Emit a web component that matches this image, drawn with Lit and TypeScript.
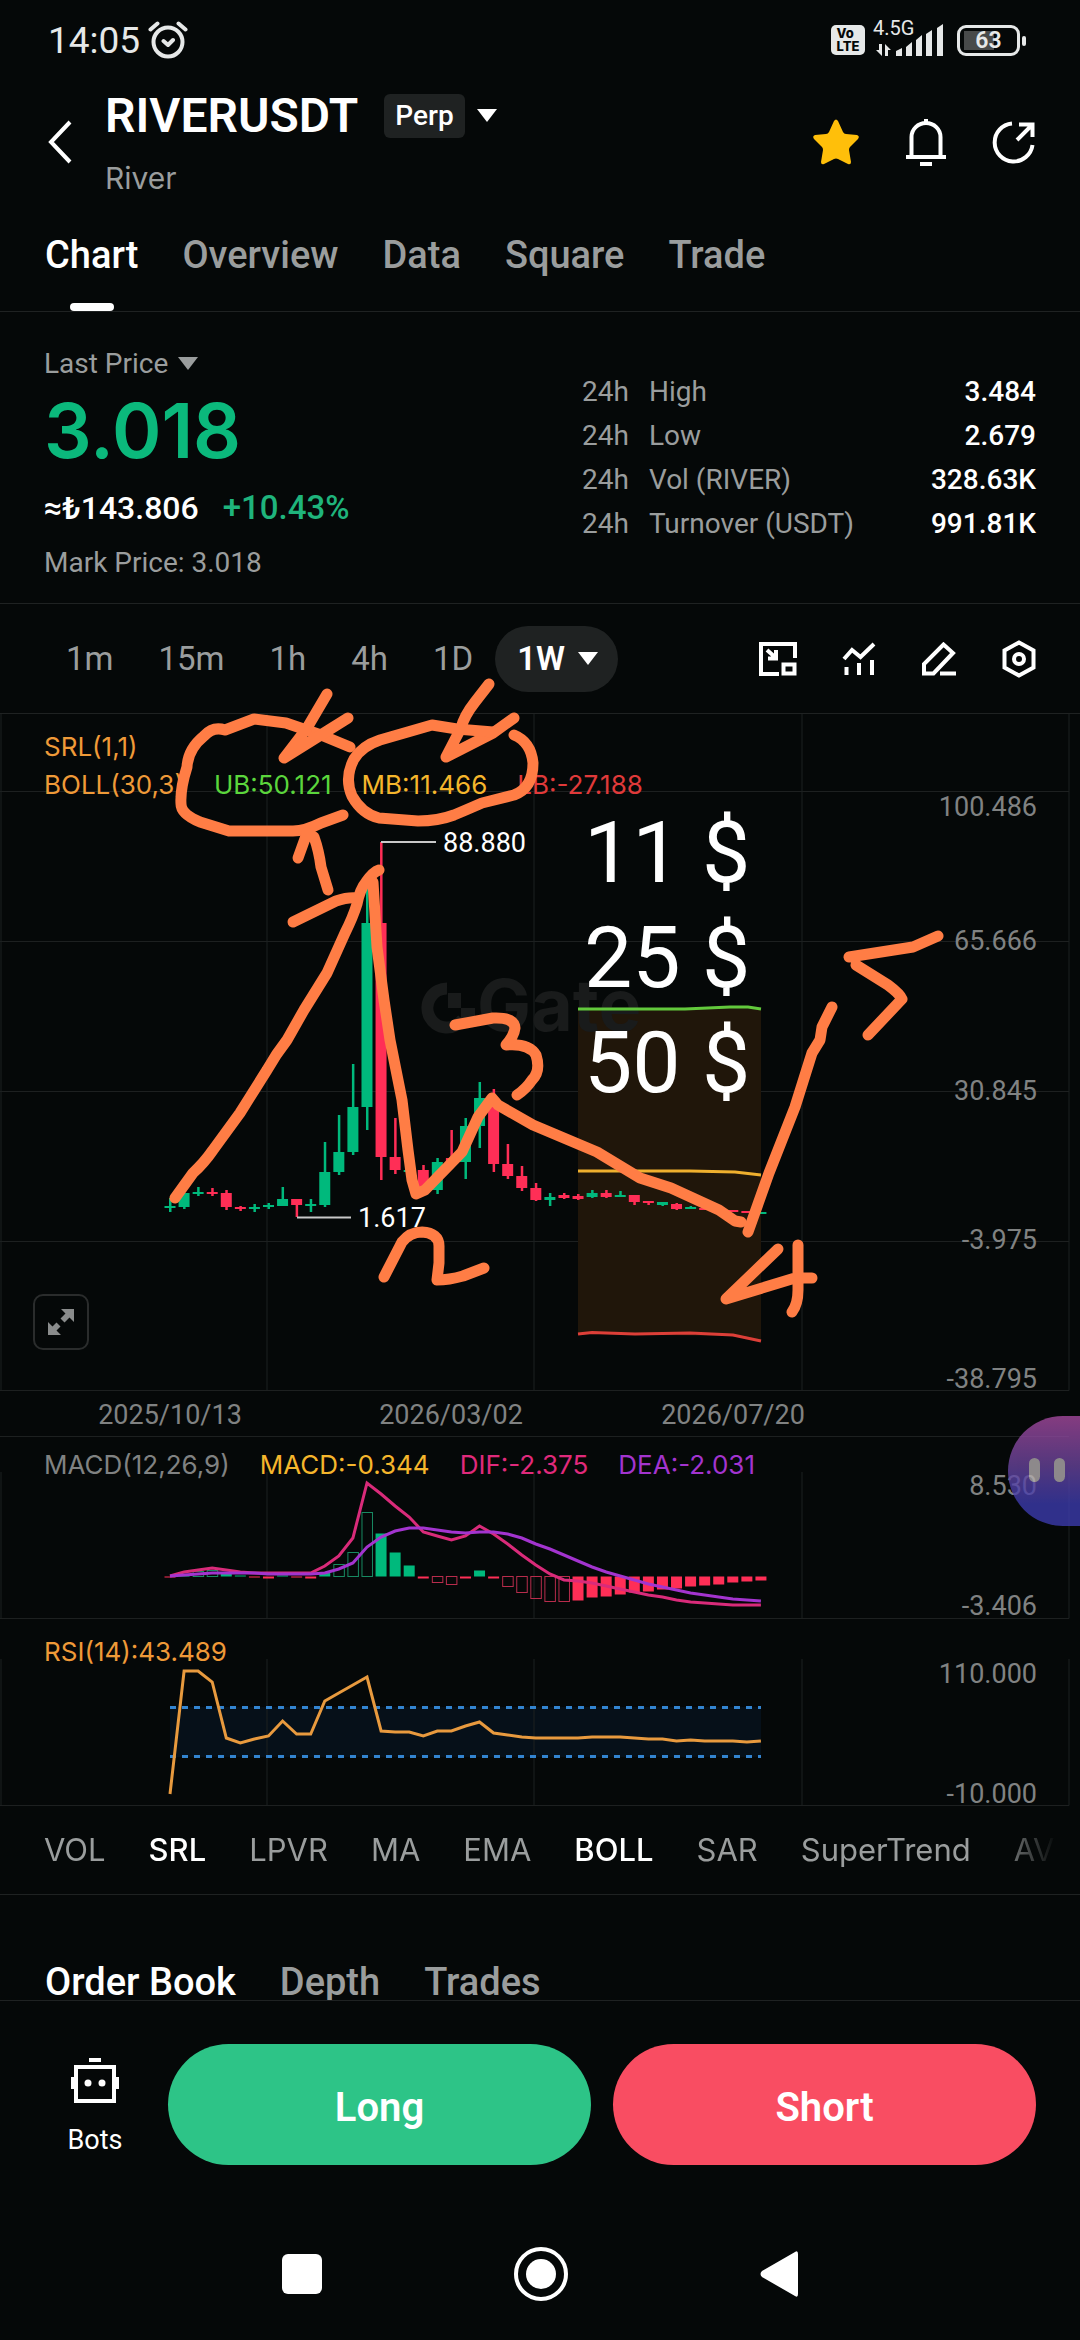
import { css, html, LitElement, svg } from 'lit';
import { customElement, property, state } from 'lit/decorators.js';
import { classMap } from 'lit/directives/class-map.js';

type Side = 'up' | 'down';

/** side, body top, body bottom, wick top, wick bottom */
type Candle = [Side, number, number, number, number];

interface MacdBar {
  value: number;
  hollow?: boolean;
}

const STEP = 14.07;
const FIRST_X = 170;
const BODY = 11;

const slotX = (i: number) => FIRST_X + i * STEP;

const CANDLES: Candle[] = [
  ['up', 492, 494, 484, 498],
  ['up', 479, 493, 479, 495],
  ['up', 478, 480, 473, 482],
  ['down', 478, 480, 474, 482],
  ['down', 479, 493, 476, 496],
  ['down', 493, 495, 492, 497],
  ['up', 493, 495, 490, 498],
  ['up', 491, 493, 489, 495],
  ['up', 485, 492, 473, 492],
  ['down', 485, 491, 485, 503],
  ['up', 490, 492, 485, 498],
  ['up', 458, 491, 428, 493],
  ['up', 438, 458, 401, 461],
  ['up', 393, 438, 350, 441],
  ['up', 209, 393, 166, 416],
  ['down', 209, 443, 128, 466],
  ['down', 443, 456, 404, 460],
  ['up', 456, 458, 454, 460],
  ['down', 456, 473, 451, 476],
  ['up', 448, 476, 444, 480],
  ['down', 444, 449, 416, 449],
  ['up', 412, 448, 404, 465],
  ['up', 384, 412, 368, 434],
  ['down', 384, 450, 375, 458],
  ['down', 450, 462, 430, 465],
  ['down', 462, 474, 452, 477],
  ['down', 474, 486, 469, 487],
  ['up', 483, 486, 479, 492],
  ['down', 481, 484, 479, 485],
  ['down', 482, 485, 480, 486],
  ['up', 479, 483, 476, 484],
  ['down', 479, 483, 476, 484],
  ['up', 481, 483, 477, 483],
  ['down', 481, 488, 481, 491],
  ['down', 487, 489, 487, 491],
  ['up', 488, 491, 488, 492],
  ['down', 490, 495, 489, 496],
  ['up', 493, 495, 492, 495],
  ['down', 494, 496, 494, 496],
  ['down', 495, 497, 495, 497],
  ['down', 496, 498, 496, 498],
  ['down', 497, 499, 497, 499],
  ['up', 498, 500, 498, 500],
];

const MACD_BARS: MacdBar[] = [
  { value: -1 },
  { value: 2 },
  { value: 5, hollow: true },
  { value: 6, hollow: true },
  { value: 3 },
  { value: 1 },
  { value: -1 },
  { value: -2 },
  { value: 1 },
  { value: -1 },
  { value: -2 },
  { value: 4 },
  { value: 12, hollow: true },
  { value: 24, hollow: true },
  { value: 64, hollow: true },
  { value: 43 },
  { value: 24 },
  { value: 11 },
  { value: -2 },
  { value: -6, hollow: true },
  { value: -8, hollow: true },
  { value: -2 },
  { value: 6 },
  { value: -2 },
  { value: -10, hollow: true },
  { value: -16, hollow: true },
  { value: -22, hollow: true },
  { value: -25, hollow: true },
  { value: -25, hollow: true },
  { value: -24 },
  { value: -21 },
  { value: -20 },
  { value: -18 },
  { value: -16 },
  { value: -15 },
  { value: -13 },
  { value: -12 },
  { value: -10 },
  { value: -9 },
  { value: -8 },
  { value: -6 },
  { value: -5 },
  { value: -4 },
];

// one y per week, measured inside its own panel
const DIF = [
  139, 135, 133, 131, 133, 135, 136, 136, 136, 136, 136, 129, 119, 101, 46, 57, 69, 80, 95, 99, 103, 99, 89, 97, 107,
  118, 128, 137, 143, 144, 146, 149, 152, 155, 158, 160, 163, 165, 166, 167, 168, 168, 168,
];
const DEA = [
  139, 138, 137, 136, 136, 136, 136, 137, 137, 137, 137, 136, 132, 126, 110, 100, 94, 91, 91, 93, 95, 96, 95, 95, 97,
  101, 107, 112, 118, 124, 130, 135, 139, 143, 147, 150, 153, 156, 158, 160, 162, 163, 164,
];
const RSI = [
  175, 52, 52, 63, 119, 124, 120, 117, 102, 115, 115, 82, 74, 66, 58, 112, 113, 113, 117, 112, 112, 107, 103, 114, 116,
  118, 119, 119, 119, 119, 118, 118, 118, 119, 120, 120, 122, 121, 122, 122, 122, 123, 122,
];

const GRID_X = [1, 267, 534, 802, 1069];
const GRID_Y = [77, 227, 377, 527];

const PRICE_AXIS = [
  { label: '100.486', y: 102 },
  { label: '65.666', y: 236 },
  { label: '30.845', y: 386 },
  { label: '-3.975', y: 535 },
  { label: '-38.795', y: 674 },
];

const STROKES = [
  'M343 101 L321 109 Q305 117 293 117 H229 L200 108 Q181 100 181 90 Q180 75 187 53 Q188 35 204 22 Q213 12 225 16 L254 5 L286 9 L321 21 L350 33',
  'M327 -20 L307 14 L284 44 L348 4',
  'M489 -30 L475 -12 Q464 2 461 14 L446 43 L493 19 L514 4',
  'M514 21 Q531 28 533 49 Q533 74 514 81 Q498 85 482 89 Q466 96 454 101 Q438 107 418 107 L379 104 Q362 100 352 82 Q344 64 354 45 Q362 32 380 26 L432 11 L457 15 L493 18',
  'M298 144 L307 119 L314 123 Q319 137 321 153 L328 176',
  'M175 484 L193 459 Q204 449 213 436 L240 399 Q252 380 267 356 Q276 340 287 326 L304 296 L327 259 L345 219 Q353 203 357 190 Q360 175 366 168 Q373 158 379 156',
  'M293 208 L336 187 Q348 183 357 184',
  'M373 168 L377 233 L384 286 L390 326 L402 386 L408 436 L412 466 L416 480 L425 476 L462 438 L478 403 L492 384 L498 391 L533 411 L597 438 L640 464 L671 474 L719 496 L735 507 L741 508',
  'M748 518 L769 459 L795 393 L812 339 L820 326 L822 313 L832 293',
  'M938 222 L913 233 L849 243 M856 251 L888 271 Q900 280 902 285 L868 321',
  'M455 311 L493 304 Q514 303 515 314 Q514 322 506 331 Q529 329 536 341 Q541 357 532 366 Q526 375 517 381',
  'M384 563 L402 528 Q410 518 422 518 Q439 519 439 532 V549 L437 566 Q449 566 463 562 L484 554',
  'M778 535 L726 585 L795 564 H812 M798 531 V576 Q798 590 792 598',
];

const points = (ys: number[]) => ys.map((y, i) => `${slotX(i).toFixed(1)},${y}`).join(' ');

@customElement('gate-icon')
export class GateIcon extends LitElement {
  static override styles = css`
    :host {
      display: inline-flex;
    }

    svg {
      display: block;
      fill: none;
      stroke: currentColor;
      stroke-width: 4;
    }

    .solid {
      fill: currentColor;
      stroke: none;
    }
  `;

  @property()
  name = '';

  private glyph() {
    switch (this.name) {
      case 'back':
        return svg`<svg width="24" height="44" viewBox="0 0 24 44"><path d="M22 2 L3 22 L22 42" /></svg>`;
      case 'star':
        return svg`<svg width="48" height="48" viewBox="0 0 48 48">
          <path class="solid" d="M22 3 Q24 0 26 3 L31 14 Q32 16 34 16 L45 17 Q48 18 46 21 L38 29 Q37 30 37 32 L39 44 Q39 47 36 46 L26 41 Q24 40 22 41 L12 46 Q9 47 9 44 L11 32 Q11 30 10 29 L2 21 Q0 18 3 17 L14 16 Q16 16 17 14 Z" />
        </svg>`;
      case 'bell':
        return svg`<svg width="40" height="48" viewBox="0 0 40 48">
          <path d="M5.500 39 V19 A14.500 14 0 0 1 34.500 19 V39 M0 39 H40 M20 1 V6 M14 46 H26" />
        </svg>`;
      case 'share':
        return svg`<svg width="44" height="44" viewBox="0 0 44 44">
          <path d="M20 3.500 A19 19 0 1 0 40.500 25 M25 20 L39 6 M27 4.500 H40.500 V17" />
        </svg>`;
      case 'pip':
        return svg`<svg width="38" height="34" viewBox="0 0 38 34">
          <path d="M36 16 V2 H2 V32 H20 M8 8 L17 16 M17 8 V16.500 H9 M24.500 22.500 H35.500 V31.500 H24.500 Z" />
        </svg>`;
      case 'indicators':
        return svg`<svg width="34" height="34" viewBox="0 0 34 34">
          <path d="M2 17 L10 8 L18.500 15 L32 2 M4.500 25 V33 M17 21 V33 M30 18 V33" />
        </svg>`;
      case 'pen':
        return svg`<svg width="36" height="34" viewBox="0 0 36 34">
          <path d="M3 31.500 V22 L22.500 2.500 L32 11 L12.500 31.500 Z M19 31.500 H35" />
        </svg>`;
      case 'hexagon':
        return svg`<svg width="34" height="38" viewBox="0 0 34 38">
          <path d="M17 2.500 L31.500 10.500 V27.500 L17 35.500 L2.500 27.500 V10.500 Z" /><circle cx="17" cy="19" r="5" />
        </svg>`;
      case 'expand':
        return svg`<svg width="26" height="26" viewBox="0 0 26 26">
          <path class="solid" d="M13 0 H26 V13 L21.500 8.500 L16.500 13.500 L12.500 9.500 L17.500 4.500 Z M0 13 L4.500 17.500 L8.500 13.500 L12.500 17.500 L8.500 21.500 L13 26 H0 Z" />
        </svg>`;
      case 'bot':
        return svg`<svg width="48" height="46" viewBox="0 0 48 46">
          <path d="M5 9 H43 V43 H5 Z M18 2 H30 M2 19 V31 M46 19 V31" />
          <circle class="solid" cx="17" cy="25" r="3.500" /><circle class="solid" cx="31" cy="25" r="3.500" />
        </svg>`;
      case 'alarm':
        return svg`<svg width="40" height="38" viewBox="0 0 40 38">
          <circle cx="20" cy="21" r="14.500" />
          <path stroke-linecap="round" stroke-linejoin="round" d="M2.500 8.500 L9.500 2.500 M37.500 8.500 L30.500 2.500 M15.500 20 L20 24 L25 19" />
        </svg>`;
      case 'signal':
        return svg`<svg width="70" height="36" viewBox="0 0 70 36">
          <path class="solid" d="M6 22 H9 V34 L3 28 H6 Z M12 34 V22 L18 28 H15 V34 Z M23 29 L29 26 V34 H23 Z M33 25 L39 20 V34 H33 Z M43 18 L49 13 V34 H43 Z M53 12 L59 8 V34 H53 Z M64 6 L70 2 V34 H64 Z" />
        </svg>`;
      case 'recents':
        return svg`<svg width="40" height="40" viewBox="0 0 40 40"><rect class="solid" width="40" height="40" rx="6" /></svg>`;
      case 'home':
        return svg`<svg width="54" height="54" viewBox="0 0 54 54">
          <circle cx="27" cy="27" r="25" /><circle class="solid" cx="27" cy="27" r="15" />
        </svg>`;
      case 'nav-back':
        return svg`<svg width="38" height="46" viewBox="0 0 38 46">
          <path class="solid" d="M35 1 Q38 -1 38 3 V43 Q38 47 35 45 L2 26 Q-1 23 2 20 Z" />
        </svg>`;
      default:
        return svg`<svg width="20" height="14" viewBox="0 0 20 14"><path class="solid" d="M0 0 H20 L10 13 Z" /></svg>`;
    }
  }

  override render() {
    return this.glyph();
  }
}

@customElement('price-chart')
export class PriceChart extends LitElement {
  static override styles = css`
    :host {
      display: block;
      position: relative;
      font-family: Roboto, sans-serif;
    }

    svg {
      display: block;
      width: 100%;
      height: auto;
    }

    .panel {
      position: relative;
    }

    .grid {
      stroke: #1d2020;
      stroke-width: 1;
    }

    .axis {
      fill: #808282;
      font-size: 27px;
      text-anchor: end;
    }

    .date {
      fill: #808282;
      font-size: 27px;
      text-anchor: middle;
    }

    .mark {
      fill: #fff;
      font-size: 27px;
    }

    .leader {
      stroke: #c8c8c8;
      stroke-width: 2;
    }

    .up {
      fill: #00b97c;
    }

    .down {
      fill: #ff2e56;
    }

    .up.hollow {
      fill: none;
      stroke: #188a62;
    }

    .down.hollow {
      fill: none;
      stroke: #b82c4c;
    }

    .line {
      fill: none;
      stroke-width: 3;
    }

    .brand {
      fill: #191b1b;
      font: 700 72px Inter, sans-serif;
    }

    .brand-arc {
      fill: none;
      stroke: #191b1b;
      stroke-width: 12;
    }

    .brand-block {
      fill: #191b1b;
    }

    .band {
      fill: #20160a;
    }

    .rsi-band {
      fill: #061019;
    }

    .rsi-limit {
      stroke: #3384d0;
      stroke-width: 3;
      stroke-dasharray: 6 6;
    }

    .legend {
      position: absolute;
      inset: 15px auto auto 44px;
      display: grid;
      gap: 2px;
      font: 400 26px/36px Inter, sans-serif;
      white-space: nowrap;
    }

    .legend.raised {
      top: 10px;
    }

    .legend div {
      display: flex;
      gap: 30px;
    }

    .orange {
      color: #ef9a38;
    }

    .green {
      color: #5bd63c;
    }

    .yellow {
      color: #f5b62c;
    }

    .red {
      color: #e03a3a;
    }

    .pink {
      color: #e02a7c;
    }

    .purple {
      color: #a334cf;
    }

    .muted {
      color: #808282;
    }

    .expand {
      position: absolute;
      left: 33px;
      bottom: 41px;
      display: grid;
      place-items: center;
      width: 56px;
      height: 56px;
      padding: 0;
      border: 2px solid #2a2c2c;
      border-radius: 10px;
      background: none;
      color: #8a8c8c;
    }

    .notes {
      position: absolute;
      inset: 0 0 auto;
      overflow: visible;
      pointer-events: none;
    }

    .notes path {
      fill: none;
      stroke: #ff7d45;
      stroke-width: 11;
      stroke-linecap: round;
      stroke-linejoin: round;
    }

    .notes text {
      fill: #fff;
      font-size: 86px;
    }
  `;

  private grid(top: number, bottom: number) {
    return svg`
      ${GRID_X.map((x) => svg`<line class="grid" x1=${x} x2=${x} y1=${top} y2=${bottom} />`)}
      <line class="grid" x1="0" x2="1069" y1=${bottom} y2=${bottom} />
    `;
  }

  private candle([side, top, bottom, high, low]: Candle, i: number) {
    const x = slotX(i);
    return svg`
      <rect class=${side} x=${x - 1} y=${high} width="2.500" height=${low - high} />
      <rect class=${side} x=${x - BODY / 2} y=${top} width=${BODY} height=${bottom - top} />
    `;
  }

  private macdBar({ value, hollow }: MacdBar, i: number) {
    const zero = 139.5;
    const inset = hollow ? 0.5 : 0;
    return svg`<rect
      class="${value > 0 ? 'up' : 'down'} ${hollow ? 'hollow' : ''}"
      x=${slotX(i) - BODY / 2 + inset}
      y=${value > 0 ? zero - value : zero}
      width=${BODY - inset}
      height=${Math.abs(value)}
    />`;
  }

  override render() {
    return html`
      <div class="panel">
        <svg viewBox="0 0 1080 677" role="img" aria-label="Weekly candles">
          ${GRID_Y.map((y) => svg`<line class="grid" x1="0" x2="1069" y1=${y + 0.5} y2=${y + 0.5} />`)}
          ${this.grid(0, 676.5)}
          <path class="band" d="M578 295 L730 293 L761 295 V627 L730 622 L578 620 Z" />
          <path class="brand-arc" d="M447 274.500 A19.500 19.500 0 1 0 463 305" />
          <path class="brand-block" d="M448 279 H461 V294 H448 Z M461 294 H475 V305 H461 Z" />
          <text class="brand" x="477" y="317">Gate</text>
          <path class="line" stroke="#62c93c" d="M578 295 L685 295 L730 293 H748 L761 295" />
          <path class="line" stroke="#efb02e" d="M578 457 H690 L735 458 L761 461" />
          <path class="line" stroke="#dd3f38" d="M578 620 L592 618.500 L635 620 L690 619 L733 621 L761 627" />
          ${CANDLES.map((c, i) => this.candle(c, i))}
          <path class="leader" d="M381 128 H436 M297 503.500 H351" />
          <text class="mark" x="443" y="138">88.880</text>
          <text class="mark" x="358" y="513">1.617</text>
          ${PRICE_AXIS.map((a) => svg`<text class="axis" x="1037" y=${a.y}>${a.label}</text>`)}
        </svg>
        <div class="legend">
          <div><span class="orange">SRL(1,1)</span></div>
          <div>
            <span class="orange">BOLL(30,3)</span>
            <span class="green">UB:50.121</span>
            <span class="yellow">MB:11.466</span>
            <span class="red">LB:-27.188</span>
          </div>
        </div>
        <button class="expand" aria-label="Full screen"><gate-icon name="expand"></gate-icon></button>
        <svg class="notes" viewBox="0 0 1080 677">
          ${STROKES.map((d) => svg`<path d=${d} />`)}
          <text x="584" y="168">11 $</text>
          <text x="584" y="273">25 $</text>
          <text x="584" y="378">50 $</text>
        </svg>
      </div>

      <svg viewBox="0 0 1080 46">
        <text class="date" x="170" y="33">2025/10/13</text>
        <text class="date" x="451" y="33">2026/03/02</text>
        <text class="date" x="733" y="33">2026/07/20</text>
        <line class="grid" x1="0" x2="1069" y1="45.500" y2="45.500" />
      </svg>

      <div class="panel">
        <svg viewBox="0 0 1080 182" role="img" aria-label="MACD">
          ${this.grid(35, 181.5)}
          ${MACD_BARS.map((b, i) => this.macdBar(b, i))}
          <polyline class="line" stroke="#d92b7a" points=${points(DIF)} />
          <polyline class="line" stroke="#a334cf" points=${points(DEA)} />
          <text class="axis" x="1037" y="58">8.530</text>
          <text class="axis" x="1037" y="178">-3.406</text>
        </svg>
        <div class="legend raised">
          <div>
            <span class="muted">MACD(12,26,9)</span>
            <span class="yellow">MACD:-0.344</span>
            <span class="pink">DIF:-2.375</span>
            <span class="purple">DEA:-2.031</span>
          </div>
        </div>
      </div>

      <div class="panel">
        <svg viewBox="0 0 1080 187" role="img" aria-label="RSI">
          <rect class="rsi-band" x="170" y="88" width="591" height="50" />
          ${this.grid(40, 186.5)}
          <path class="rsi-limit" d="M170 88.500 H761 M170 137.500 H761" />
          <polyline class="line" stroke="#e89a3e" points=${points(RSI)} />
          <text class="axis" x="1037" y="64">110.000</text>
          <text class="axis" x="1037" y="184">-10.000</text>
        </svg>
        <div class="legend">
          <div><span class="orange">RSI(14):43.489</span></div>
        </div>
      </div>
    `;
  }
}

@customElement('app-root')
export class AppRoot extends LitElement {
  static override styles = css`
    :host {
      display: flex;
      flex-direction: column;
      min-height: 100vh;
      overflow: hidden;
      background: #050808;
      color: #fff;
      font-family: Roboto, sans-serif;
      font-size: 28px;
    }

    button {
      padding: 0;
      border: 0;
      background: none;
      color: inherit;
      font: inherit;
    }

    .status {
      display: flex;
      align-items: center;
      justify-content: space-between;
      height: 80px;
      padding: 0 58px 0 48px;
      color: #e6e8e8;
    }

    .clock,
    .radios {
      display: flex;
      align-items: center;
      gap: 8px;
    }

    .clock {
      font-size: 37px;
    }

    .volte {
      display: grid;
      place-content: center;
      width: 34px;
      height: 30px;
      border-radius: 5px;
      background: #e6e8e8;
      color: #050808;
      font: 800 13px/13px Inter, sans-serif;
    }

    .network {
      position: relative;
      display: flex;
    }

    .network span {
      position: absolute;
      top: -4px;
      left: 0;
      font-size: 20px;
      line-height: 20px;
    }

    .battery {
      position: relative;
      width: 63px;
      height: 31px;
      margin: 0 2px 0 6px;
      box-sizing: border-box;
      border: 3px solid #e6e8e8;
      border-radius: 9px;
      background: linear-gradient(#484a4a, #484a4a) 4px 3px / 30px 19px no-repeat;
      font-size: 23px;
      font-weight: 600;
      line-height: 26px;
      text-align: center;
    }

    .battery::after {
      content: '';
      position: absolute;
      top: 8px;
      right: -9px;
      width: 4px;
      height: 10px;
      border-radius: 2px;
      background: #e6e8e8;
    }

    .header {
      display: flex;
      align-items: center;
      padding: 8px 44px 0 48px;
    }

    .titles {
      flex: 1;
      padding-left: 33px;
    }

    .symbol {
      display: flex;
      align-items: center;
      gap: 12px;
      height: 56px;
    }

    h1 {
      margin: 0 14px 0 0;
      font-size: 48px;
      font-weight: 600;
      line-height: 56px;
    }

    .badge {
      padding: 0 11px;
      border-radius: 6px;
      background: #1f2222;
      font-weight: 500;
      line-height: 44px;
    }

    .subtitle {
      margin-top: 16px;
      color: #9a9d9d;
      font: 400 30px/36px Inter, sans-serif;
    }

    .actions {
      display: flex;
      align-items: center;
      gap: 46px;
    }

    .header button,
    .tools button {
      display: flex;
    }

    .star {
      color: #ffbf0a;
    }

    .tabs {
      display: flex;
      gap: 44px;
      padding: 32px 45px 0;
      border-bottom: 1px solid #1f2222;
      color: #9a9d9d;
      font-size: 38px;
      font-weight: 500;
    }

    .tabs button {
      position: relative;
      padding-bottom: 29px;
      line-height: 54px;
    }

    .active {
      color: #fff;
    }

    .tabs .active::after {
      content: '';
      position: absolute;
      bottom: 0;
      left: calc(50% - 22px);
      width: 44px;
      height: 8px;
      border-radius: 4px;
      background: #fff;
    }

    .quote {
      display: flex;
      justify-content: space-between;
      padding: 34px 44px 13px;
      border-bottom: 1px solid #1f2222;
      color: #9a9d9d;
    }

    .kind {
      display: flex;
      align-items: center;
      gap: 10px;
      line-height: 36px;
    }

    .last {
      color: #0bb97c;
      font: 600 75px/98px Inter, sans-serif;
    }

    .fiat {
      display: flex;
      gap: 24px;
      color: #fff;
      font-size: 32px;
      font-weight: 500;
      line-height: 56px;
    }

    .fiat .gain {
      color: #1fb47c;
      font-size: 33px;
    }

    .mark {
      line-height: 54px;
    }

    .stats {
      align-self: start;
      margin-top: 24px;
      border-collapse: collapse;
      line-height: 44px;
    }

    .stats th,
    .stats td {
      padding: 0;
      font-weight: 400;
      text-align: left;
    }

    .stats th {
      padding-right: 20px;
    }

    .stats .value {
      width: 182px;
      color: #fff;
      font-weight: 500;
      text-align: right;
    }

    .toolbar {
      display: flex;
      align-items: center;
      justify-content: space-between;
      padding: 22px 44px 21px 66px;
      border-bottom: 1px solid #1f2222;
    }

    .frames {
      display: flex;
      align-items: center;
      color: #9a9d9d;
      font-size: 33px;
      line-height: 66px;
    }

    .frames button {
      margin-right: 45px;
    }

    .frames button:nth-last-child(2) {
      margin-right: 22px;
    }

    .frames .current {
      display: flex;
      align-items: center;
      gap: 13px;
      margin: 0;
      padding: 0 20px 0 22px;
      border-radius: 33px;
      background: #1f2222;
      color: #fff;
      font-weight: 600;
    }

    .tools {
      display: flex;
      align-items: center;
      gap: 45px;
    }

    .indicators {
      display: flex;
      gap: 43px;
      margin-right: 24px;
      padding: 0 0 0 44px;
      overflow: hidden;
      color: #9a9d9d;
      font: 400 31px/88px Inter, sans-serif;
      white-space: nowrap;
      mask-image: linear-gradient(90deg, #000 94%, transparent);
    }

    .indicators .active {
      font-weight: 500;
    }

    .book {
      display: flex;
      gap: 44px;
      height: 106px;
      padding: 68px 45px 0;
      box-sizing: border-box;
      overflow: hidden;
      border-top: 1px solid #1f2222;
      color: #9a9d9d;
      font-size: 38px;
      font-weight: 500;
      line-height: 38px;
    }

    .book button {
      height: 38px;
    }

    .trade {
      display: flex;
      gap: 22px;
      padding: 43px 44px 44px;
      border-top: 1px solid #1f2222;
    }

    .bots {
      display: grid;
      justify-items: center;
      align-content: center;
      gap: 16px;
      width: 102px;
      padding-top: 8px;
      line-height: 40px;
      font-size: 27px;
    }

    .side {
      flex: 1;
      height: 121px;
      padding-top: 6px;
      border-radius: 61px;
      font-size: 40px;
      font-weight: 600;
    }

    .long {
      background: #2dc487;
    }

    .short {
      background: #f94d62;
    }

    .system {
      display: flex;
      align-items: center;
      justify-content: center;
      gap: 192px;
      height: 130px;
    }

    .system button {
      display: flex;
    }

    .chart-area {
      position: relative;
    }

    .bubble {
      position: absolute;
      right: 0;
      bottom: 280px;
      display: flex;
      gap: 14px;
      width: 72px;
      height: 110px;
      padding: 42px 0 0 21px;
      box-sizing: border-box;
      border-radius: 55px 0 0 55px;
      background: linear-gradient(#a94ba2, #6a459f 45%, #3d3cb0 80%);
      opacity: 0.78;
    }

    .bubble i {
      width: 11px;
      height: 24px;
      border-radius: 6px;
      background: #b4aeb0;
    }
  `;

  @state()
  private tab = 'Chart';

  @state()
  private enabled = new Set(['SRL', 'BOLL']);

  @state()
  private bookTab = 'Order Book';

  private toggleIndicator(name: string): void {
    const next = new Set(this.enabled);
    if (!next.delete(name)) next.add(name);
    this.enabled = next;
  }

  override render() {
    return html`
      <div class="status">
        <div class="clock"><span>14:05</span><gate-icon name="alarm"></gate-icon></div>
        <div class="radios">
          <div class="volte"><span>Vo</span><span>LTE</span></div>
          <div class="network"><span>4.5G</span><gate-icon name="signal"></gate-icon></div>
          <div class="battery">63</div>
        </div>
      </div>

      <header class="header">
        <button aria-label="Back"><gate-icon name="back"></gate-icon></button>
        <div class="titles">
          <div class="symbol">
            <h1>RIVERUSDT</h1>
            <span class="badge">Perp</span>
            <button aria-label="Switch market"><gate-icon name="caret"></gate-icon></button>
          </div>
          <div class="subtitle">River</div>
        </div>
        <div class="actions">
          <button class="star" aria-label="Favourite"><gate-icon name="star"></gate-icon></button>
          <button aria-label="Alerts"><gate-icon name="bell"></gate-icon></button>
          <button aria-label="Share"><gate-icon name="share"></gate-icon></button>
        </div>
      </header>

      <nav class="tabs">
        ${['Chart', 'Overview', 'Data', 'Square', 'Trade'].map(
          (t) => html`
            <button class=${classMap({ active: t === this.tab })} @click=${() => (this.tab = t)}>${t}</button>
          `,
        )}
      </nav>

      <section class="quote">
        <div>
          <button class="kind">Last Price <gate-icon name="caret"></gate-icon></button>
          <div class="last">3.018</div>
          <div class="fiat"><span>≈₺143.806</span><span class="gain">+10.43%</span></div>
          <div class="mark">Mark Price: 3.018</div>
        </div>
        <table class="stats">
          ${[
            ['High', '3.484'],
            ['Low', '2.679'],
            ['Vol (RIVER)', '328.63K'],
            ['Turnover (USDT)', '991.81K'],
          ].map(
            ([label, value]) => html`
              <tr>
                <th scope="row">24h</th>
                <td>${label}</td>
                <td class="value">${value}</td>
              </tr>
            `,
          )}
        </table>
      </section>

      <div class="toolbar">
        <div class="frames">
          ${['1m', '15m', '1h', '4h', '1D'].map((f) => html`<button>${f}</button>`)}
          <button class="current">1W <gate-icon name="caret"></gate-icon></button>
        </div>
        <div class="tools">
          <button aria-label="Floating chart"><gate-icon name="pip"></gate-icon></button>
          <button aria-label="Indicators"><gate-icon name="indicators"></gate-icon></button>
          <button aria-label="Draw"><gate-icon name="pen"></gate-icon></button>
          <button aria-label="Chart settings"><gate-icon name="hexagon"></gate-icon></button>
        </div>
      </div>

      <div class="chart-area">
        <price-chart></price-chart>
        <button class="bubble" aria-label="Assistant"><i></i><i></i></button>
      </div>

      <div class="indicators">
        ${['VOL', 'SRL', 'LPVR', 'MA', 'EMA', 'BOLL', 'SAR', 'SuperTrend', 'AVL'].map(
          (name) => html`
            <button
              class=${classMap({ active: this.enabled.has(name) })}
              @click=${() => this.toggleIndicator(name)}
            >${name}</button>
          `,
        )}
      </div>

      <nav class="book">
        ${['Order Book', 'Depth', 'Trades'].map(
          (t) => html`
            <button class=${classMap({ active: t === this.bookTab })} @click=${() => (this.bookTab = t)}>${t}</button>
          `,
        )}
      </nav>

      <footer class="trade">
        <button class="bots"><gate-icon name="bot"></gate-icon>Bots</button>
        <button class="side long">Long</button>
        <button class="side short">Short</button>
      </footer>

      <div class="system">
        <button aria-label="Recent apps"><gate-icon name="recents"></gate-icon></button>
        <button aria-label="Home"><gate-icon name="home"></gate-icon></button>
        <button aria-label="System back"><gate-icon name="nav-back"></gate-icon></button>
      </div>
    `;
  }
}

declare global {
  interface HTMLElementTagNameMap {
    'gate-icon': GateIcon;
    'price-chart': PriceChart;
    'app-root': AppRoot;
  }
}
